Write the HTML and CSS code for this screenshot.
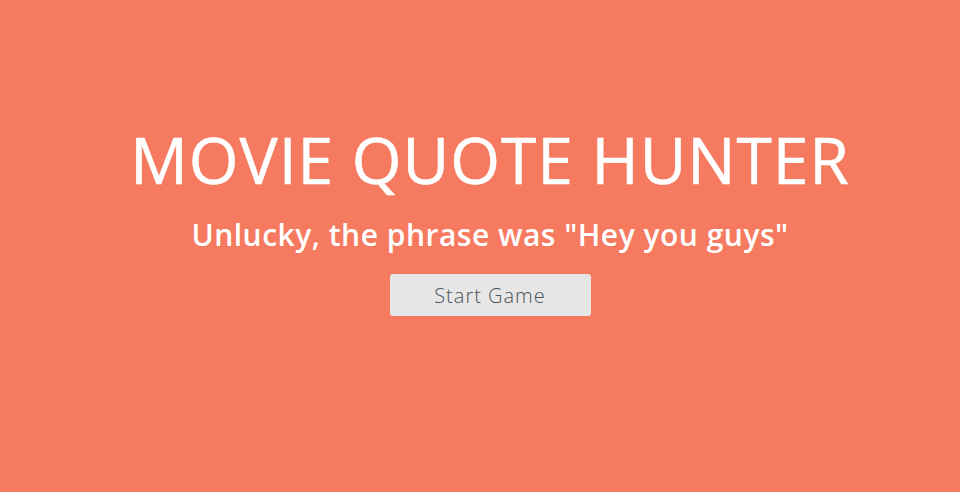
FILE: index.html
```html
<!DOCTYPE html>
<html>
<head>
<meta charset="utf-8">
<link rel="stylesheet" href="styles.css">
</head>
<body>
<main class="screen">
  <h1 class="title">MOVIE QUOTE HUNTER</h1>
  <h2 class="message">Unlucky, the phrase was "Hey you guys"</h2>
  <button class="start">Start Game</button>
</main>
</body>
</html>
```
FILE: styles.css
```css
html, body {
  margin: 0;
  padding: 0;
  height: 100%;
}
body {
  background: #f67a60;
  font-family: "Open Sans", "DejaVu Sans", sans-serif;
}
.screen {
  display: flex;
  flex-direction: column;
  align-items: center;
  padding-top: 124px;
  padding-left: 20px;
}
.title {
  margin: 0;
  color: #fff;
  font-size: 64px;
  font-weight: 400;
  line-height: 72px;
  letter-spacing: 1px;
  -webkit-text-stroke: 0.6px #fff;
}
.message {
  margin: 19px 0 0;
  color: #fff;
  font-size: 30px;
  font-weight: 600;
  line-height: 40px;
  letter-spacing: 0.5px;
}
.start {
  margin-top: 19px;
  width: 201px;
  height: 42px;
  background: #e6e6e6;
  border: none;
  border-radius: 3px;
  color: #4a5459;
  font-family: "Open Sans", sans-serif;
  font-size: 20px;
  font-weight: 300;
  letter-spacing: 1px;
  padding: 0;
}
```
